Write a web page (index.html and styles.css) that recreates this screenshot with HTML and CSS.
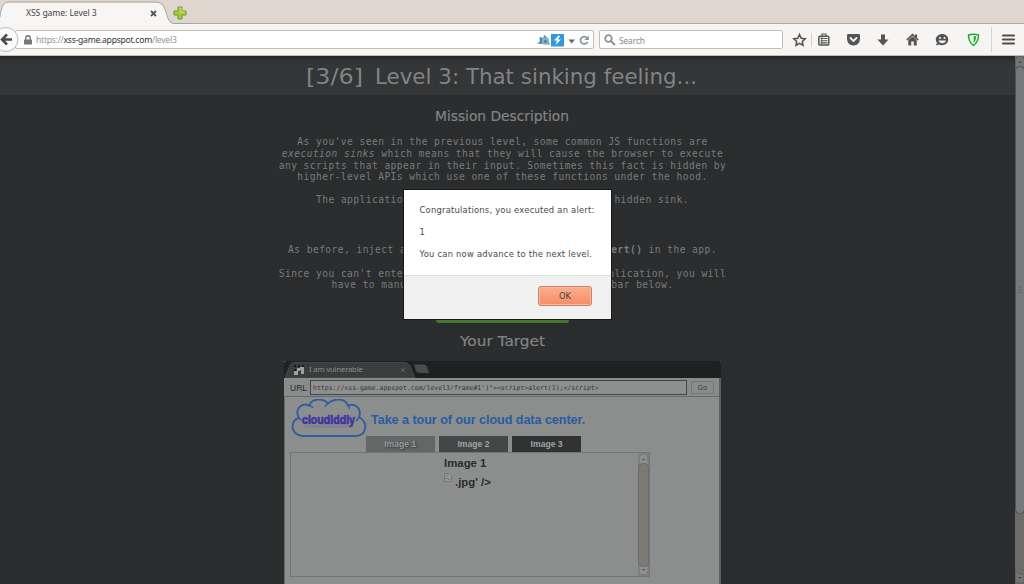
FILE: index.html
```
<!DOCTYPE html>
<html lang="en">
<head>
<meta charset="utf-8">
<title>XSS game: Level 3</title>
<link rel="stylesheet" href="styles.css">
</head>
<body>
<div class="browser">
  <header class="tabstrip">
    <svg class="tab-shape" width="190" height="25" viewBox="0 0 190 25"><path d="M0 25V12C1 5 4 2.500 9 2.500H155C162 2.500 164 6 166 12C168 19 169 23.500 175 23.500H190V25Z" fill="#f8f6f4"/><path d="M0 17C1 6 4 2 9 2H155C162 2 164 6 166 12C168 19 169 23.500 175 23.500H190" fill="none" stroke="#aaa39b"/></svg>
    <span class="tab-title">XSS game: Level 3</span>
    <svg class="tab-close" width="7" height="7" viewBox="0 0 7 7"><path d="M1 1L6 6M6 1L1 6" stroke="#555" stroke-width="1.800"/></svg>
    <svg class="tab-new" width="14" height="14" viewBox="0 0 14 14"><path d="M5 1H9V5H13V9H9V13H5V9H1V5H5Z" fill="#a6ca3c" stroke="#71982a"/><path d="M6 2H8V6H12" fill="none" stroke="#c8df72"/></svg>
  </header>
  <nav class="toolbar">
    <svg class="back" width="20" height="27" viewBox="0 0 20 27"><circle cx="6" cy="13.500" r="12" fill="#fbfafa" stroke="#b9b9bb"/><path d="M12 13.500H3M7 8.500L2 13.500L7 18.500" fill="none" stroke="#4c4c4c" stroke-width="2.500"/></svg>
    <div class="urlbar">
      <svg class="lock" width="8" height="10" viewBox="0 0 8 10"><path d="M1.800 5V3A2.200 2.200 0 0 1 6.200 3V5" fill="none" stroke="#777" stroke-width="1.400"/><rect y="4.500" width="8" height="5" rx=".7" fill="#777"/></svg>
      <span class="url">https://<b>xss-game.appspot.com</b>/level3</span>
      <svg width="56" height="14" viewBox="0 0 56 14"><path d="M0 10.500L3 8.500L2.500 4L6 5L7.500 2L10 4.500L13 11.500Z" fill="#3987bd"/><circle cx="8.500" cy="8" r="3.800" fill="#93b2c8"/><path d="M6.500 9.500L8.500 6L10.500 9.500Z" fill="#4a7594"/><rect x="14" y="1" width="13" height="12.500" fill="#3399dd"/><path d="M21.500 2.500L17 7.500H20L18.500 12L24 6.500H21L23 3Z" fill="#fff"/><path d="M31.500 6.500H38L34.700 10.500Z" fill="#666"/><path d="M50 4.800A3.700 3.700 0 1 0 50.600 8.800" fill="none" stroke="#8793a0" stroke-width="1.700"/><path d="M51.800 2.500V7H47.300Z" fill="#8793a0"/></svg>
    </div>
    <div class="searchbar">
      <svg width="12" height="12" viewBox="0 0 12 12"><circle cx="4.500" cy="4.500" r="3.300" fill="none" stroke="#909090" stroke-width="1.700"/><path d="M7 7L11 11" stroke="#909090" stroke-width="2"/></svg>
      <span>Search</span>
    </div>
    <svg class="tools" width="241" height="31" viewBox="783 24 241 31" fill="#555">
      <path d="M799.500 34.500L801.200 38.200L805.200 38.700L802.300 41.400L803 45.400L799.500 43.400L796 45.400L796.700 41.400L793.800 38.700L797.800 38.200Z" fill="none" stroke="#505050" stroke-width="1.500"/>
      <path d="M811.500 33V47" stroke="#d6d3d0"/>
      <rect x="818.800" y="36.200" width="10" height="8.800" rx="1" fill="none" stroke="#555" stroke-width="1.500"/><path d="M822 36V34H826V36M820.500 38.500H827.500M820.500 40.700H827.500M820.500 42.900H827.500" fill="none" stroke="#555" stroke-width="1.100"/><path d="M821.700 37V45" stroke="#555" stroke-width=".8"/>
      <path d="M847 35.200Q847 34 848.200 34H858.800Q860 34 860 35.200V39Q859.500 45 853.500 45.500Q847.500 45 847 39Z"/><path d="M850 37.500L853.500 41L857 37.500" fill="none" stroke="#f6f4f3" stroke-width="1.800"/>
      <path d="M881 34.500H885V39.500H888.500L883 45.500L877.500 39.500H881Z"/>
      <path d="M906.800 40L912.500 34.700L918.200 40" fill="none" stroke="#555" stroke-width="1.600"/><path d="M908.300 40L912.500 36.500L916.700 40V45.500H913.800V41.500H911.200V45.500H908.300ZM915 34.500H917V38H915Z"/>
      <path d="M942.300 34C946 34 948.300 36.500 948.300 39.500C948.300 43 945.500 45.200 942 45.200C940.500 45.200 939.500 44.800 939 44.500L936 45.500L937 42.700C936.200 41.800 935.800 41 935.800 39.600C935.800 36.500 938.500 34 942.300 34Z"/><circle cx="940" cy="38" r="1" fill="#f6f4f3"/><circle cx="944.500" cy="38" r="1" fill="#f6f4f3"/><path d="M938.500 40.500H946C945 44 939.500 44 938.500 40.500Z" fill="#f6f4f3"/>
      <path d="M968.500 35Q973.500 33.500 978.500 35C978.500 39.500 977 43 973.500 45.500C970 43 968.500 39.500 968.500 35Z" fill="none" stroke="#18b12b" stroke-width="1.500"/><path d="M973.700 36V43C975.300 41.500 976 39.500 976 36.200Z" fill="#18b12b"/>
      <path d="M991.500 27V52" stroke="#d6d3d0"/>
      <path d="M1003 35.500H1014M1003 39.500H1014M1003 43.500H1014" stroke="#505050" stroke-width="2.200" stroke-linecap="round"/>
    </svg>
  </nav>
  <div class="viewport">
    <main class="page">
      <h1 class="level"><svg width="396" height="39" viewBox="304 0 396 39"><text x="305" y="28" textLength="57" lengthAdjust="spacingAndGlyphs">[3/6]</text><text x="374" y="28" textLength="322" lengthAdjust="spacingAndGlyphs">Level 3: That sinking feeling...</text></svg></h1>
      <h2 class="heading"><svg width="140" height="41" viewBox="0 0 140 41"><text x="2" y="25.500" textLength="134" lengthAdjust="spacingAndGlyphs">Mission Description</text></svg></h2>
      <p class="copy intro">As you've seen in the previous level, some common JS functions are<br><i>execution sinks</i> which means that they will cause the browser to execute<br>any scripts that appear in their input. Sometimes this fact is hidden by<br>higher-level APIs which use one of these functions under the hood.</p>
      <p class="copy">The application on this level is using one such hidden sink.</p>
      <h2 class="heading objective"><svg width="140" height="26" viewBox="0 0 140 26"><text x="6" y="17" textLength="128" lengthAdjust="spacingAndGlyphs">Mission Objective</text></svg></h2>
      <p class="copy">As before, inject a script to pop up a JavaScript <b>alert()</b> in the app.</p>
      <p class="copy">Since you can't enter your payload anywhere in the application, you will<br>have to manually edit the address in the URL bar below.</p>
      <div class="advance"></div>
      <h2 class="heading target"><svg width="140" height="38" viewBox="0 0 140 38"><text x="27" y="22.500" textLength="85" lengthAdjust="spacingAndGlyphs">Your Target</text></svg></h2>
      <section class="frame">
        <div class="frame-tabs">
          <svg width="150" height="17" viewBox="0 0 150 17"><path d="M1 17L6 4Q7 1.500 10 1.500H120Q124 1.500 126 5L131 17Z" fill="#3b3c3d" stroke="#4b4c4d" stroke-width=".8"/><path d="M130 3.500H140Q142 3.500 143 6L145 12H135Q133 12 132 10Z" fill="#4a4c4d"/><path d="M10 4H12V6H10ZM14 4H16V6H14ZM18 4H20V7H18ZM10 8H12V10H10Z" fill="#161718"/><path d="M13 7H16V10H13ZM16 6H20V13H17V9H16ZM10 10H14V14H10Z" fill="#a0a0a0"/><path d="M117 7L121 11M121 7L117 11" stroke="#626364"/></svg>
          <span>I am vulnerable</span>
        </div>
        <div class="frame-url"><label>URL</label><div class="field">https://xss-game.appspot.com/level3/frame#1')"&gt;&lt;script&gt;alert(1);&lt;/script&gt;</div><div class="go">Go</div></div>
        <div class="frame-body">
          <div class="banner">
            <svg width="76" height="42" viewBox="0 0 76 42"><defs><linearGradient id="ink" x1="0" y1="0" x2="0" y2="1"><stop offset="0" stop-color="#473db0"/><stop offset="1" stop-color="#30298c"/></linearGradient></defs><path d="M11 37C-1 35 -1 21 8 19C3 10 11 3 18 6.500C21-.5 32-1.500 37 4.500C44-1.500 54-.5 57 6.500C65 4 71 10 68 18C78 24 75 36 66 37Z" fill="none" stroke="#315f9e" stroke-width="2"/><path d="M8 19Q9 21 11 21M18 6.500Q21 7 22 9M37 4.500Q35 6 34 8M57 6.500Q59 8 58 10M68 18Q67 21 65 22" fill="none" stroke="#315f9e" stroke-width="1.400"/><text class="logo" x="11" y="25" textLength="53" lengthAdjust="spacingAndGlyphs" fill="url(#ink)">cloudiddly</text><path d="M12 27.500H62" stroke="#6766a0" stroke-width="2" opacity=".35"/></svg>
            <span>Take a tour of our cloud data center.</span>
          </div>
          <div class="image-tabs"><div class="current">Image 1</div><div>Image 2</div><div class="last">Image 3</div></div>
          <div class="gallery">
            <div class="picture"><div>Image 1</div><div class="broken"><svg width="8" height="9" viewBox="0 0 8 9"><path d="M.5.5H5.500L7.500 2.500V8.500H.5Z" fill="#999b9b" stroke="#757778"/><path d="M2 3H5M1 6L3 5L5 7L7 5" fill="none" stroke="#757778"/></svg>.jpg' /&gt;</div></div>
            <svg width="11" height="123" viewBox="0 0 11 123"><rect width="11" height="123" fill="#808181"/><rect x="1" y="1" width="9" height="121" rx="4.500" fill="#8f9090" stroke="#747575"/><rect x=".5" y="10.500" width="10" height="103" rx="4" fill="#7c7a77" stroke="#6d6c6a"/><path d="M3.500 7L5.500 5L7.500 7ZM3.500 116L5.500 118L7.500 116Z" fill="#606161"/></svg>
          </div>
        </div>
      </section>
    </main>
    <svg class="scroll" width="9" height="528" viewBox="0 0 9 528"><rect width="9" height="528" fill="#6e6c69"/><rect x=".5" y=".5" width="9" height="14" rx="4" fill="#747575" stroke="#5e5f5f"/><rect x=".5" y="10.500" width="9" height="447" rx="4" fill="#777879" stroke="#505151"/><path d="M.5 514Q1 518 .5 527H9V518Q4 520 .5 514" fill="#747575" stroke="#5e5f5f"/><path d="M3 7L5 5L7 7ZM3 521L5 523L7 521Z" fill="#494a4a"/><path d="M3 231H7M3 233.500H7M3 236H7" stroke="#666"/></svg>
  </div>
</div>
<div class="dialog">
  <div class="message"><p>Congratulations, you executed an alert:</p><p>1</p><p>You can now advance to the next level.</p></div>
  <div class="actions"><div class="ok">OK</div></div>
</div>
</body>
</html>
```
FILE: styles.css
```
* { box-sizing: border-box; }
body { margin: 0; overflow: hidden; }
svg { display: block; flex: none; }
h1, h2, p { margin: 0; font-weight: normal; }
.browser { width: 1024px; height: 584px; display: flex; flex-direction: column; font-family: "Open Sans", sans-serif; }

.tabstrip { height: 24px; flex: none; background: #dfd7cf; box-shadow: inset 0 -1px #b2aaa2; display: flex; position: relative; }
.tab-shape { position: absolute; left: 0; top: 0; }
.tab-title { position: relative; margin-left: 26px; width: 124px; font: 8.6px/27px "Noto Sans", sans-serif; letter-spacing: -.08px; color: #454545; }
.tab-close { position: relative; margin-top: 10px; }
.tab-new { position: relative; margin: 6px 0 0 16px; }

.toolbar { height: 32px; flex: none; background: #f7f5f3; border-bottom: 1px solid #c3beb4; display: flex; }
.back { margin-top: 2px; position: relative; }
.urlbar, .searchbar { height: 19px; margin-top: 6px; background: #fff; border: 1px solid #c9bdb2; border-radius: 2px; display: flex; align-items: center; }
.urlbar { width: 579px; margin-left: -5px; padding-left: 8px; }
.url { font: 8.6px/17px "Noto Sans", sans-serif; letter-spacing: -.26px; color: #949494; margin-left: 4px; padding-top: 1px; flex: 1; }
.url b { font-weight: normal; color: #333; }
.searchbar { width: 184px; margin-left: 5px; padding-left: 4px; gap: 3px; font: 8.4px/17px "Noto Sans", sans-serif; letter-spacing: -.1px; color: #888; }
.searchbar span { padding-top: 1px; }

.viewport { height: 528px; display: flex; overflow: hidden; background: #2a2c2d; }
.page { width: 1015px; height: 528px; overflow: hidden; display: flex; flex-direction: column; align-items: center; color: #7e8080; background: conic-gradient(#292b2c 25%, #2c2e2f 0 50%, #292b2c 0 75%, #2c2e2f 0) 0 0 / 2px 2px; }
.page > * { flex: none; transform: translateX(-5px); }
.level { width: 1040px; height: 39px; display: flex; justify-content: center; background: conic-gradient(#323435 25%, #353738 0 50%, #323435 0 75%, #353738 0) 0 0 / 2px 2px; box-shadow: inset 0 5px 5px -3px #202322; }
.level text { font: 20.5px "DejaVu Sans", sans-serif; fill: #828384; }
.heading { height: 41px; }
.heading text { font: 13.2px "DejaVu Sans", sans-serif; fill: #828384; stroke: #828384; stroke-width: .2px; }
.copy { font: 9.6px/11.75px "DejaVu Sans Mono", monospace; letter-spacing: .44px; text-align: center; white-space: nowrap; margin-bottom: 12px; color: #797b7b; }
.copy.intro { margin-bottom: 11px; }
.heading.objective { height: 26px; margin-bottom: 0; }
.advance { width: 133px; height: 20px; border-radius: 3px; background: #477832; }
.heading.target { height: 38px; }

.frame { width: 437px; height: 223px; background: #8c8e8e; border-right: 2px solid #5c5e5f; display: flex; flex-direction: column; }
.frame-tabs { width: 437px; height: 17px; background: #1e2021; display: flex; border-radius: 2px 2px 0 0; }
.frame-tabs span { margin-left: -125px; font: 7.7px/17px "Noto Sans", sans-serif; letter-spacing: -.17px; color: #8c8e8e; }
.frame-url { height: 19px; display: flex; align-items: center; padding: 1px 5px 0 6px; background: #8a8c8c; border-bottom: 1px solid #66696a; }
.frame-url label { width: 20px; font: 8.5px "Liberation Sans", Arial, sans-serif; color: #292b2c; }
.field { width: 377px; height: 15px; border: 1px solid #444748; background: #8e9090; padding-left: 2px; font: 6.5px/14px "DejaVu Sans Mono", monospace; color: #343637; white-space: nowrap; }
.go { width: 23px; height: 13px; margin-left: 4px; border: 1px solid #747677; border-radius: 2px; text-align: center; font: 7px/11px "Noto Sans", sans-serif; color: #393b3c; }
.frame-body { height: 187px; border-left: 1px solid #696c6d; font-family: "Liberation Sans", Arial, sans-serif; font-weight: bold; }
.banner { height: 39px; display: flex; padding: 2px 0 0 6px; }
.banner span { margin-left: 4px; font-size: 12.6px; letter-spacing: -.05px; line-height: 42px; color: #285ba0; white-space: nowrap; }
.logo { font: bold 12px "Liberation Sans", Arial, sans-serif; stroke: #4138a0; stroke-width: .7px; }
.image-tabs { height: 16px; display: flex; gap: 3.700px; padding-left: 80.500px; }
.image-tabs div { width: 69.500px; height: 16px; background: #444647; color: #a1a3a3; font-size: 8.6px; line-height: 17px; text-align: center; }
.image-tabs .current { background: #646667; color: #999b9b; text-shadow: 1px 1px 2px #333; }
.image-tabs .last { background: #303233; }
.gallery { width: 360px; height: 125px; margin-left: 5px; border: 1px solid #737576; display: flex; }
.picture { width: 347px; padding-left: 153px; font-size: 11.4px; line-height: 20px; color: #292b2c; }
.broken { display: flex; gap: 3px; line-height: 18px; }

.dialog { position: absolute; left: 404px; top: 190px; width: 207px; height: 129px; background: #fff; box-shadow: 0 0 0 1px #161717; font-family: "DejaVu Sans", sans-serif; color: #484848; }
.message { height: 85px; padding: 9px 0 0 15.500px; font-size: 8.4px; letter-spacing: .22px; line-height: 22px; white-space: nowrap; }
.actions { height: 44px; background: #f0f0f0; border-top: 1px solid #dedede; display: flex; justify-content: flex-end; padding: 10px 19px 0 0; }
.ok { width: 54px; height: 20px; border: 1px solid #cb8067; border-radius: 3px; background: linear-gradient(#fbae8d, #f68c66); box-shadow: inset 0 0 0 1px #ffb89d; text-align: center; font-size: 8.4px; line-height: 18px; }
```
